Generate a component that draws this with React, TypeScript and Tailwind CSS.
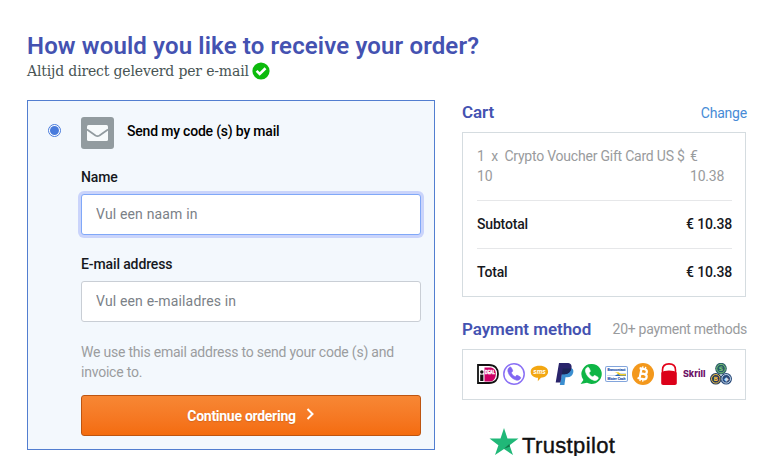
import React from "react";

const Ideal = () => (
  <svg viewBox="0 0 22 22" className="size-[22px]">
    <path d="M1 2h11c6 0 9 3.500 9 9s-3 9-9 9H1z" fill="#fff" stroke="#111" strokeWidth="1.800" />
    <path d="M7.500 4.500h5c4.200 0 6.300 2.300 6.300 6.500s-2.100 7.500-6.300 7.500h-5z" fill="#cc0066" />
    <circle cx="4.800" cy="9" r="1.700" fill="#111" />
    <path d="M3.200 11.600h3.200V18H3.200z" fill="#111" />
    <text x="8" y="11.300" fontSize="4.500" fontWeight="700" fill="#fff" stroke="#fff" strokeWidth=".4" fontFamily="Liberation Sans, sans-serif" textLength="10" lengthAdjust="spacingAndGlyphs">DEAL</text>
  </svg>
);

const phonePath =
  "M6.600 5.200c.8-.9 1.600-.7 2.100.2l1.100 2.200c.3.700.1 1.100-.4 1.500l-.8.8c.7 1.800 1.900 3 3.600 3.700l.9-.9c.5-.5.9-.5 1.500-.2l2.100 1.200c.8.500.8 1.200.1 2-1 1.100-2.300 1.500-3.800 1-4-1.400-6.500-4.100-7.500-7.900-.3-1.400.1-2.600 1.100-3.600z";

const Phone = () => (
  <svg viewBox="0 0 22 22" className="size-[22px]">
    <circle cx="11" cy="11" r="10.200" fill="#fff" stroke="#8a70f5" strokeWidth="1.500" />
    <path d={phonePath} fill="#8066f2" stroke="#8066f2" strokeWidth=".6" transform="translate(-1 -1) scale(1.080)" />
  </svg>
);

const Sms = () => (
  <svg viewBox="0 0 22 22" className="size-[22px]">
    <path d="M11.500 2.700c5.300 0 8.600 2.500 8.600 6s-3.200 5.700-7.200 6L9.800 18.200l.2-3.400c-4.400-.3-7.300-2.600-7.300-6.100 0-3.500 3.500-6 8.800-6z" fill="#f3a712" />
    <text x="5.200" y="10.800" fontSize="7.500" fontWeight="700" fontStyle="italic" fill="#fff" fontFamily="Liberation Sans, sans-serif" textLength="12.500" lengthAdjust="spacingAndGlyphs">sms</text>
  </svg>
);

const Paypal = () => (
  <svg viewBox="0 0 22 22" className="size-[22px]">
    <path d="M9 5h6.500c3 0 4.300 1.500 3.800 4.300-.7 3.600-2.800 5-6 5h-1.800L10.400 22H5.800z" fill="#3b8fd0" />
    <path d="M5 0h8c3.500 0 5 1.900 4.500 5-.7 4.200-3.400 6.200-7.200 6.200H7.900L6.500 19.500H1.700z" fill="#29246b" />
    <path d="M8.800 5.500h8.500c-1 3.900-3.500 5.800-7 5.800H7.900z" fill="#1b2457" />
  </svg>
);

const Whatsapp = () => (
  <svg viewBox="0 0 22 22" className="size-[22px]">
    <path d="M12 1a10 10 0 1 1-5 18.800L.6 20.900l2.800-4A10 10 0 0 1 12 1z" fill="#0eb545" />
    <path d={phonePath} fill="#fff" stroke="#fff" strokeWidth=".6" transform="translate(-.4 -.8) scale(1.080)" />
  </svg>
);

const Bancontact = () => (
  <svg viewBox="0 0 22 22" className="h-[22px] w-[23px]" preserveAspectRatio="none">
    <rect x=".5" y="3.500" width="21" height="15" rx="1.500" fill="#fff" stroke="#82a5dc" />
    <text x="2.500" y="7.900" fontSize="3.800" fontWeight="700" fill="#2b57ae" stroke="#2b57ae" strokeWidth=".2" fontFamily="Liberation Sans, sans-serif" textLength="17" lengthAdjust="spacingAndGlyphs">Bancontact</text>
    <path d="M2 12.800h6c3 0 3.500-2 6-2h6V13H2z" fill="#2866b9" />
    <path d="M9 9.200h4l2 1.800h5v1.600h-4c-3.500 0-4-3.400-7-3.400z" fill="#f3cf27" />
    <text x="2.500" y="17.200" fontSize="3.800" fontWeight="700" fill="#2b57ae" stroke="#2b57ae" strokeWidth=".2" fontFamily="Liberation Sans, sans-serif" textLength="17" lengthAdjust="spacingAndGlyphs">Mister Cash</text>
  </svg>
);

const Bitcoin = () => (
  <svg viewBox="0 0 22 22" className="size-[22px]">
    <circle cx="11" cy="11" r="11" fill="#f3981c" />
    <g transform="rotate(12 11 11)" fill="none" stroke="#fff" strokeWidth="2.200">
      <path d="M6.500 6h5.200c3.500 0 3.500 4.800 0 4.800H8.500M8.500 6v10M6.500 16h5.700c4 0 4-5.200 0-5.200" />
      <path d="M9.400 3.500V6m2.800-2.500V6M9.400 16v2.500m2.800-2.500v2.500" strokeWidth="1.400" />
    </g>
  </svg>
);

const Lock = () => (
  <svg viewBox="0 0 22 22" className="size-[22px]">
    <path d="M4.500 9V7C4.500 3 7.300.9 11 .9S17.500 3 17.500 7v2" fill="none" stroke="#e30018" strokeWidth="1.600" />
    <path d="M3.200 9.500C5.500 6.800 16.500 6.800 18.800 9.500V20c0 1.300-.7 2-2 2H5.200c-1.300 0-2-.7-2-2z" fill="#dc0019" />
  </svg>
);

const Skrill = () => (
  <svg viewBox="0 0 22 22" className="h-[22px] w-[23px]" preserveAspectRatio="none">
    <text x="0" y="14.200" fontSize="9.500" fontWeight="800" fill="#6d1468" fontFamily="Inter, sans-serif" textLength="21.500" lengthAdjust="spacingAndGlyphs">Skrill</text>
  </svg>
);

const coins = [
  { x: 11, y: 5.6, ring: "#285d68", dot: "#7cc576", mark: "S" },
  { x: 5.8, y: 15.8, ring: "#243a5b", dot: "#f4bf42", mark: "B" },
  { x: 16.2, y: 15.8, ring: "#294978", dot: "#c5dcf2", mark: "◆" },
];

const Coins = () => (
  <svg viewBox="0 0 22 22" className="size-[22px]">
    {coins.map((c) => (
      <g key={c.mark}>
        <circle cx={c.x} cy={c.y} r="5.800" fill={c.ring} />
        <circle cx={c.x} cy={c.y} r="4.300" fill="none" stroke={c.dot} strokeWidth="1" />
        <text x={c.x} y={c.y + 2.2} textAnchor="middle" fontSize="6" fontWeight="700" fill={c.dot} fontFamily="DejaVu Sans, sans-serif">{c.mark}</text>
      </g>
    ))}
  </svg>
);

const Field = ({ label, placeholder, focused = false }: { label: string; placeholder: string; focused?: boolean }) => (
  <label className="block">
    <span className="block h-5 text-[14px] font-medium leading-5 tracking-[-0.12px] text-[#16181d]">{label}</span>
    <input
      type="text"
      placeholder={placeholder}
      className={`mt-[7px] block h-[41px] w-[340px] rounded-[3px] border bg-white px-[14px] pb-[2px] text-[14px] tracking-[0.16px] outline-none placeholder:text-[#7b8187] ${
        focused ? "border-[#80a8f8] shadow-[0_0_0_3px_#cad4fb]" : "border-[#c9ced5]"
      }`}
    />
  </label>
);

const TotalRow = ({ label }: { label: string }) => (
  <div className="flex h-[48px] items-center justify-between border-t border-[#e6e7e9] pb-[2px] font-medium tracking-[-0.18px]">
    <span>{label}</span>
    <span>€ 10.38</span>
  </div>
);

export default function App() {
  return (
    <main className="flex h-[456px] w-[775px] flex-col overflow-hidden bg-white pl-[27px] font-['Roboto',sans-serif] text-[14px] leading-5 text-[#16181d]">
      <h1 className="mt-[31px] h-[30px] whitespace-nowrap text-[24px] font-semibold leading-[30px] tracking-[0.14px] text-[#4452b1]">How would you like to receive your order?</h1>
      <div className="flex h-5 items-center whitespace-nowrap font-['DejaVu_Serif',serif] text-[14px] leading-5 tracking-[-0.16px] text-[#485454]">
        <span className="w-[225px]">Altijd direct geleverd per e-mail</span>
        <svg viewBox="0 0 18 18" className="size-[18px] shrink-0">
          <circle cx="9" cy="9" r="8.600" fill="#0cba0c" />
          <path d="m4.600 8.800 3.100 3.100 5.800-5.700" fill="none" stroke="#fff" strokeWidth="2.600" />
        </svg>
      </div>

      <div className="mt-[19px] flex items-start gap-[27px]">
        <section className="h-[350px] w-[408px] shrink-0 border border-[#527ed0] bg-[#f3f8fd] pl-[20px] pt-[16px]">
          <div className="flex h-8 items-center">
            <span className="-mt-1.5 flex size-[13px] items-center justify-center rounded-full border border-[#487bdc] bg-white">
              <span className="size-[9px] rounded-full bg-[#487bdc]" />
            </span>
            <svg viewBox="0 0 33 32" className="ml-[20px] h-8 w-[33px]">
              <rect width="33" height="32" rx="3" fill="#929b9f" />
              <rect x="6" y="8" width="21" height="16" rx="1.500" fill="#f7fafb" />
              <path d="m6 12.500 8.500 6q2 1.300 4 0l8.500-6" fill="none" stroke="#929b9f" strokeWidth="1.700" />
            </svg>
            <span className="-mt-1 ml-[13px] whitespace-nowrap font-medium tracking-[-0.2px] text-black">Send my code (s) by mail</span>
          </div>
          <div className="ml-[33px] mt-[18px]">
            <Field label="Name" placeholder="Vul een naam in" focused />
            <div className="h-[19px]" />
            <Field label="E-mail address" placeholder="Vul een e-mailadres in" />
            <p className="mt-[20px] w-[340px] tracking-[-0.22px] text-[#9b9d9f]">We use this email address to send your code (s) and<br />invoice to.</p>
            <button className="mt-[13px] flex h-[41px] w-[340px] items-center justify-center rounded-[3px] border border-[#bd5511] bg-linear-to-b from-[#f78734] to-[#f46c0e] text-[14px] font-bold tracking-[-0.28px] text-white [text-shadow:0_1px_1px_#a8551a66]">
              Continue ordering
              <svg viewBox="0 0 9 12" className="-mt-1 ml-[10px] h-3 w-[9px]"><path d="m1.500 1 5 5-5 5" fill="none" stroke="#fff" strokeWidth="2" /></svg>
            </button>
          </div>
        </section>

        <aside className="w-[285px]">
          <div className="flex h-[32px] items-center justify-between">
            <h2 className="-mt-2 text-[17px] font-semibold tracking-[-0.1px] text-[#4452b1]">Cart</h2>
            <a className="-mt-1.5 tracking-[-0.2px] text-[#478bd6]">Change</a>
          </div>
          <div className="h-[165px] w-[284px] border border-[#d5dce0] pl-[14px] pr-[13px] pt-[13px]">
            <div className="flex h-[54px] tracking-[-0.22px] text-[#999b9d]">
              <p className="w-[213px] whitespace-nowrap">1&nbsp; x&nbsp; Crypto Voucher Gift Card US $<br />10</p>
              <p>€<br />10.38</p>
            </div>
            <TotalRow label="Subtotal" />
            <TotalRow label="Total" />
          </div>
          <div className="mt-[22px] flex h-5 items-center justify-between whitespace-nowrap">
            <h2 className="text-[17px] font-semibold tracking-[-0.05px] text-[#4452b1]">Payment method</h2>
            <span className="tracking-[-0.28px] text-[#999b9d]">20+ payment methods</span>
          </div>
          <div className="mt-[10px] flex h-[51px] w-[284px] items-center justify-between border border-[#d5dce0] pb-px pl-[14px] pr-[13px]">
            <Ideal /><Phone /><Sms /><Paypal /><Whatsapp /><Bancontact /><Bitcoin /><Lock /><Skrill /><Coins />
          </div>
          <div className="ml-[27px] mt-[28px] flex h-[28px]">
            <svg viewBox="0 0 30 29" className="h-[28px] w-[30px]">
              <path d="m15 0 3.600 11H30l-9.200 6.800L24.300 28 15 21.800 5.700 28l3.500-10.200L0 11h11.400z" fill="#20b878" />
              <path d="m21.300 19.200-.8-2.700-5.500 5z" fill="#12784a" />
            </svg>
            <span className="ml-[3px] mt-[4px] text-[22px] leading-[28px] tracking-[0.36px] text-[#111] font-['Liberation_Sans',sans-serif] [-webkit-text-stroke:0.4px_#111]">Trustpilot</span>
          </div>
        </aside>
      </div>
    </main>
  );
}
